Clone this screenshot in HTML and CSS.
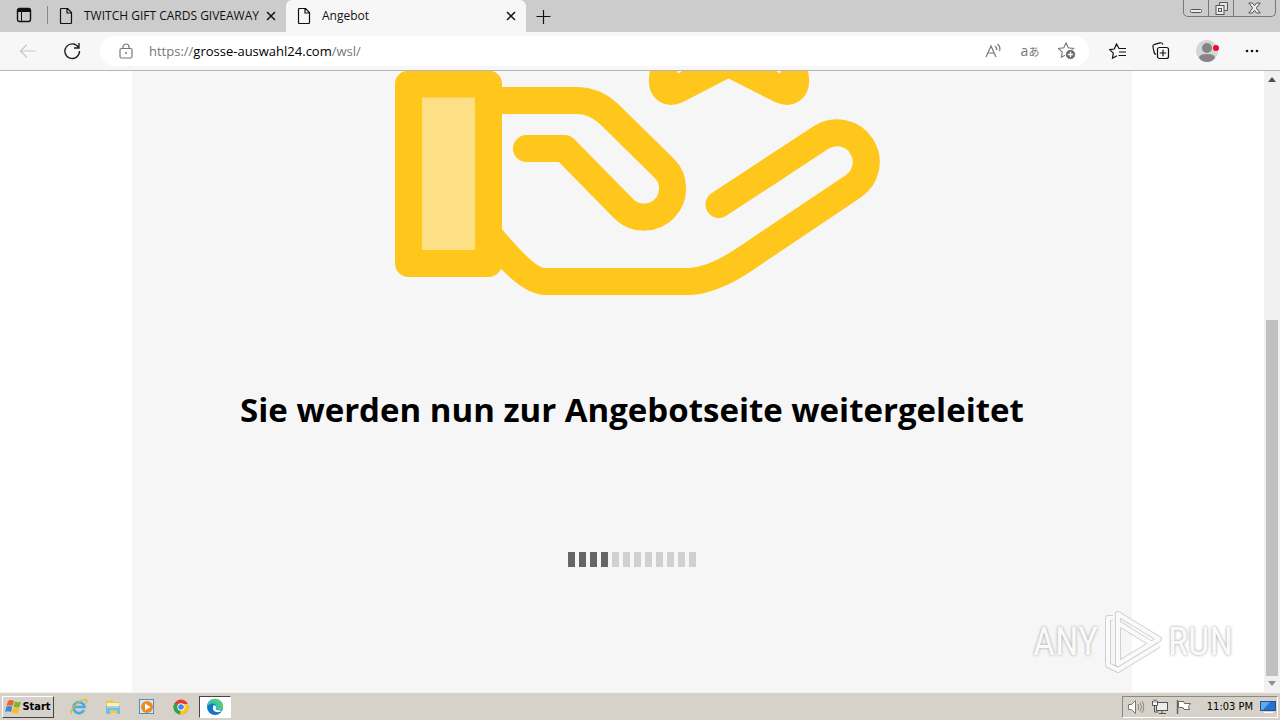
FILE: index.html
```html
<!DOCTYPE html>
<html lang="de">
<head>
<meta charset="utf-8">
<meta name="viewport" content="width=device-width, initial-scale=1">
<title>Angebot</title>
<link rel="stylesheet" href="styles.css">
</head>
<body>
<header class="tabstrip">
  <button class="tab-actions" aria-label="Tab actions"><svg width="16" height="16" viewBox="0 0 16 16"><rect x="1.500" y="1.500" width="13" height="13" rx="2" fill="none" stroke="#111" stroke-width="1.400"/><path d="M2 3.500h12" stroke="#111" stroke-width="3"/><path d="M5.500 5v9" stroke="#111"/></svg></button>
  <div class="tab">
    <svg width="14" height="16" viewBox="0 0 14 16"><path d="M2.500.5h6l4 4v10q0 1-1 1h-9q-1 0-1-1v-13q0-1 1-1zM8 1v4h4.500" fill="none" stroke="#111" stroke-width="1.200"/></svg>
    <span class="tab-title">TWITCH GIFT CARDS GIVEAWAY</span>
    <button class="tab-close" aria-label="Close tab"><svg width="10" height="10" viewBox="0 0 10 10"><path d="M1 1l8 8M9 1L1 9" stroke="#111" stroke-width="1.500"/></svg></button>
  </div>
  <div class="tab tab-active">
    <svg width="14" height="16" viewBox="0 0 14 16"><path d="M2.500.5h6l4 4v10q0 1-1 1h-9q-1 0-1-1v-13q0-1 1-1zM8 1v4h4.500" fill="none" stroke="#111" stroke-width="1.200"/></svg>
    <span class="tab-title">Angebot</span>
    <button class="tab-close" aria-label="Close tab"><svg width="10" height="10" viewBox="0 0 10 10"><path d="M1 1l8 8M9 1L1 9" stroke="#111" stroke-width="1.500"/></svg></button>
  </div>
  <button class="new-tab" aria-label="New tab"><svg width="15" height="15" viewBox="0 0 15 15"><path d="M7.500 1v14M.5 7.500h14" stroke="#111" stroke-width="1.200"/></svg></button>
  <div class="window-controls">
    <button aria-label="Minimize"><svg width="12" height="12" viewBox="0 0 12 12"><rect x=".5" y="7.500" width="11" height="3" rx="1" fill="#eee" stroke="#555"/></svg></button>
    <button aria-label="Restore"><svg width="13" height="13" viewBox="0 0 13 13"><path d="M4.500 3.500v-3h8v8h-3" fill="#e5e5e5" stroke="#555"/><rect x="1" y="3.500" width="8" height="9" fill="#eee" stroke="#555"/><rect x="3.500" y="6.500" width="3" height="3" fill="none" stroke="#555"/></svg></button>
    <button class="window-close" aria-label="Close"><svg width="13" height="12" viewBox="0 0 13 12"><path d="M.8 1h3.500l2.200 2.700L8.700 1h3.500L8.300 6l3.900 5H8.700L6.500 8.300 4.300 11H.8l3.900-5z" fill="#eee" stroke="#555"/></svg></button>
  </div>
</header>
<nav class="toolbar">
  <button class="back" aria-label="Back"><svg width="18" height="16" viewBox="0 0 18 16"><path d="M16.500 8H2M8 1.500L1.500 8 8 14.500" fill="none" stroke="#c8c8c8" stroke-width="1.200"/></svg></button>
  <button class="reload" aria-label="Reload"><svg width="18" height="18" viewBox="0 0 18 18"><path d="M15.500 5.500A7.300 7.300 0 1 0 16.500 9M16 1v5h-5" fill="none" stroke="#222" stroke-width="1.400"/></svg></button>
  <div class="address">
    <svg width="14" height="16" viewBox="0 0 14 16"><rect x="1" y="5.500" width="12" height="9.500" rx="1.500" fill="none" stroke="#777" stroke-width="1.200"/><path d="M4 5.500V4a3 3 0 0 1 6 0v1.500" fill="none" stroke="#777" stroke-width="1.200"/><circle cx="7" cy="10" r="1" fill="#777"/></svg>
    <a class="url" href="#"><span>https://</span><b>grosse-auswahl24.com</b><span>/wsl/</span></a>
    <div class="address-actions">
      <button aria-label="Read aloud"><svg width="17" height="16" viewBox="0 0 17 16"><path d="M1 14L6 3l5 11M3 10h6M10 3q2 1.500 1.500 4M12.500 1q3.500 3 2 7" fill="none" stroke="#777" stroke-width="1.200"/></svg></button>
      <button class="translate" aria-label="Translate">a<small>あ</small></button>
      <button aria-label="Add to favorites"><svg width="18" height="18" viewBox="0 0 18 18"><path d="M8 1l2.200 4.800 5.300.7-3.800 3.600.9 5.200L8 12.800l-4.600 2.500.9-5.200L.5 6.500l5.300-.7z" fill="#fff" stroke="#777" stroke-width="1.100"/><circle cx="12.500" cy="12.500" r="5" fill="#666" stroke="#fff"/><path d="M12.500 9.800v5.400M9.800 12.500h5.400" stroke="#fff" stroke-width="1.300"/></svg></button>
    </div>
  </div>
  <div class="toolbar-actions">
    <button aria-label="Favorites"><svg width="18" height="17" viewBox="0 0 18 17"><path d="M17 5.500H10L7.500 1 5.300 6 .8 6.600l3.500 3.500-.8 5.100 4.500-2.400M10 9h7M9.500 12.500H17" fill="none" stroke="#111" stroke-width="1.200"/></svg></button>
    <button aria-label="Collections"><svg width="18" height="18" viewBox="0 0 18 18"><path d="M4 12.500Q2.500 12 2 10L1 5Q.6 3 2.700 2.300L8 .8q2-.4 3 1.700" fill="none" stroke="#111" stroke-width="1.200"/><rect x="5.500" y="5.500" width="11" height="11" rx="2" fill="#f7f7f7" stroke="#111" stroke-width="1.200"/><path d="M11 7.800v6.400M7.800 11h6.400" stroke="#111" stroke-width="1.200"/></svg></button>
    <button aria-label="Profile"><svg width="24" height="24" viewBox="0 0 24 24"><circle cx="12" cy="12" r="11" fill="#d5d5d5"/><circle cx="12" cy="9" r="5" fill="#858585"/><path d="M4 19q0-4 8-4t8 4q-3 4-8 4t-8-4z" fill="#858585"/><circle cx="21" cy="9" r="3" fill="#e3122a"/></svg></button>
    <button aria-label="Settings and more"><svg width="16" height="6" viewBox="0 0 16 6"><g fill="#111"><circle cx="3" cy="3" r="1.300"/><circle cx="8" cy="3" r="1.300"/><circle cx="13" cy="3" r="1.300"/></g></svg></button>
  </div>
</nav>
<div class="viewport">
  <main class="panel">
    <svg class="hand" viewBox="382 71 500 226" aria-hidden="true">
      <rect x="408.500" y="84" width="80" height="179.500" fill="#fddf85" stroke="#ffc61c" stroke-width="27" stroke-linejoin="round"/>
      <g fill="none" stroke="#ffc61c" stroke-width="27" stroke-linecap="round" stroke-linejoin="round">
        <path d="M489 100.500H576Q595 100.500 609 114L664 168A28.300 28.300 0 0 1 624 209L564.500 148.500H526.500"/>
        <path d="M719 204.500L821 137.500A29.200 29.200 0 0 1 853 186.500L748 257Q715 280 690 281.500H545C530 281.500 510 260 490 236"/>
      </g>
      <path d="M650 71Q646 90 656 99Q668 109 683 102L728.500 78.500L775 102Q790 109 802 99Q812 90 808 71Z" fill="#ffc61c"/>
      <path d="M677 71h5l-4 2.500zM776 71h5l-1 2.500z" fill="#f7f7f7"/>
    </svg>
    <h1>Sie werden nun zur Angebotseite weitergeleitet</h1>
    <div class="progress" role="progressbar" aria-label="Weiterleitung" aria-valuemin="0" aria-valuemax="12" aria-valuenow="4">
      <i class="done"></i><i class="done"></i><i class="done"></i><i class="done"></i><i></i><i></i><i></i><i></i><i></i><i></i><i></i><i></i>
    </div>
  </main>
  <div class="scrollbar"><svg width="8" height="5" viewBox="0 0 8 5"><path d="M0 5L4 0l4 5z" fill="#505050"/></svg><div class="thumb"></div><svg width="8" height="5" viewBox="0 0 8 5"><path d="M0 0l4 5 4-5z" fill="#909090"/></svg></div>
  <div class="watermark">
    <span>ANY</span>
    <svg width="60" height="64" viewBox="0 0 60 64"><g fill="none" stroke-linejoin="round"><path d="M15 4l41 25-41 25zM15 13l34 21M10 8H5v47l10 5 41-25" stroke="#d0d0d0" stroke-width="6"/><path d="M15 4l41 25-41 25zM15 13l34 21M10 8H5v47l10 5 41-25" stroke="#fafafa" stroke-width="4"/></g></svg>
    <span>RUN</span>
  </div>
</div>
<footer class="taskbar">
  <button class="start"><svg width="17" height="16" viewBox="0 0 17 16"><path d="M3 2q3-2 6 0L7.500 7q-3-1.500-6 0z" fill="#ef6427"/><path d="M10 2.500q3 1.500 6 0L14.500 8q-3 1-6-.5z" fill="#76b82a"/><path d="M1.300 8q3-2 6 0L6 13q-3-1.500-6 0z" fill="#3c88dc"/><path d="M8.300 8.500q3 1.500 6 0L13 14q-3 1-6-.5z" fill="#f9bd20"/></svg>Start</button>
  <div class="launchers">
    <button aria-label="Internet Explorer"><svg width="18" height="18" viewBox="0 0 18 18"><path d="M14 12A5.500 5.500 0 1 1 14.500 9H4" fill="none" stroke="#43aee4" stroke-width="2.700"/><path d="M2 16Q-1 13 6 6.500T16.500 2q1 1-1 3.500" fill="none" stroke="#e6b632" stroke-width="1.300"/></svg></button>
    <button aria-label="Explorer"><svg width="18" height="18" viewBox="0 0 18 18"><path d="M2 3l6-1 1 2h6v11H2z" fill="#e9c65c"/><path d="M3 5h12v3H3z" fill="#fff1aa"/><path d="M2 8h14v8h-3v-4H6v4H2z" fill="#76bde0"/><path d="M3 9h12" stroke="#c8ecf8"/></svg></button>
    <button aria-label="Media Player"><svg width="18" height="18" viewBox="0 0 18 18"><rect x="1.500" y="1.500" width="14" height="14" fill="#d5ecf8" stroke="#4c92bd"/><circle cx="9" cy="9" r="6" fill="#f28a1b"/><path d="M7 5.500v7l5.500-3.500z" fill="#fff"/></svg></button>
    <button aria-label="Chrome"><svg width="18" height="18" viewBox="0 0 18 18"><circle cx="9" cy="9" r="7.500" fill="#e53c2f"/><path d="M9 9L2.500 5.200A7.500 7.500 0 0 0 8.500 16.500z" fill="#2da44e"/><path d="M9 9l-1 7.500A7.500 7.500 0 0 0 15.800 6H9z" fill="#fbc824"/><circle cx="9" cy="9" r="3.700" fill="#fff"/><circle cx="9" cy="9" r="2.800" fill="#4285f4"/></svg></button>
    <button class="current" aria-label="Edge"><svg width="18" height="18" viewBox="0 0 18 18"><circle cx="9" cy="9" r="8" fill="#1475c4"/><path d="M1 9A8 8 0 0 1 17 8.500Q17 12 13 12q-4 0-3-2 1-4-3-4.500Q3 5.500 1 9z" fill="#36c4b4"/><path d="M4 3Q9-1 14 3q3 2.500 3 6 0 3-4 3 3-5-2-8-3-1.500-7-1z" fill="#62cd62"/><path d="M7.500 7q-2 6 3 7 3 .5 5.500-1-2-1-4-.7-3-.3-2-2.300 1-2-2.500-3z" fill="#fff"/></svg></button>
  </div>
  <div class="tray">
    <svg width="18" height="16" viewBox="0 0 18 16"><path d="M1.500 5.500h3l4-4v13l-4-4h-3z" fill="#fff" stroke="#777"/><path d="M11 5q1.500 3 0 6M13 3.500q3 4.500 0 9M15 2q3.500 6 0 12" fill="none" stroke="#888"/></svg>
    <svg width="18" height="16" viewBox="0 0 18 16"><rect x="5.500" y="3.500" width="11" height="8" fill="#eee" stroke="#555"/><path d="M8 14.500h7M11 12v2M3.500 7v6h4" fill="none" stroke="#555"/><path d="M1.500 2v4.500h5V2M3 .5v3M5 .5v3" fill="#fff" stroke="#555"/></svg>
    <svg width="18" height="16" viewBox="0 0 18 16"><path d="M2.500 1v14" stroke="#666" stroke-width="1.500"/><path d="M3.500 2.500h5l1 2h6l-2 3 1 3H9l-1-2H3.500z" fill="#fff" stroke="#666"/></svg>
    <time>11:03 PM</time>
    <svg width="16" height="14" viewBox="0 0 16 14"><rect x=".5" y="1.500" width="15" height="9" fill="#2672cf" stroke="#235199"/><path d="M1 2h9L3 10H1z" fill="#61a9ee"/><path d="M4 12.500h9" stroke="#fff"/></svg>
  </div>
</footer>
</body>
</html>
```

FILE: styles.css
```css
* { box-sizing: border-box; }
body { margin: 0; height: 100vh; display: flex; flex-direction: column; overflow: hidden; font: 12px/16px "Open Sans", "Noto Sans", sans-serif; color: #111; background: #fff; }
button { display: flex; align-items: center; justify-content: center; padding: 0; border: 0; background: none; color: inherit; font: inherit; }
svg { display: block; flex: none; }
.tabstrip { height: 32px; flex: none; display: flex; background: #ccc; }
.tab-actions { width: 48px; border-right: 1px solid #888; margin: 6px 0 8px; }
.tab { width: 238px; display: flex; align-items: center; gap: 11px; padding: 0 9px 0 11px; }
.tab-active { width: 240px; background: #f7f7f7; border-radius: 6px 6px 0 0; }
.tab-title { flex: 1; min-width: 0; white-space: nowrap; }
.tab-close { width: 12px; height: 16px; flex: none; }
.new-tab { width: 34px; }
.window-controls { margin: 0 4px 0 auto; height: 17px; display: flex; border: 1px solid #777; border-top: 0; border-radius: 0 0 5px 5px; overflow: hidden; }
.window-controls button { width: 25px; border-right: 1px solid #777; }
.window-controls .window-close { width: 41px; border-right: 0; }
.toolbar { height: 39px; flex: none; display: flex; align-items: center; background: #f7f7f7; border-bottom: 1px solid #b5b5b5; }
.back { width: 56px; }
.reload { width: 32px; margin-right: 12px; }
.address { flex: 1; height: 30px; display: flex; align-items: center; gap: 16px; padding: 0 13px 0 19px; border-radius: 15px; background: #fff; }
.url { flex: 1; font-size: 13px; text-decoration: none; color: #777; }
.url b { font-weight: 400; color: #000; }
.address-actions { display: flex; gap: 18px; color: #777; }
.translate { width: 20px; font-size: 14px; }
.translate small { font: 11px "Noto Sans CJK JP", sans-serif; }
.toolbar-actions { display: flex; align-items: center; gap: 25px; padding: 0 20px; }
.viewport { flex: 1; min-height: 0; position: relative; display: flex; background: #fff; }
.panel { width: 100%; max-width: 1000px; margin: 0 auto; display: flex; flex-direction: column; align-items: center; background: #f6f6f6; }
.hand { width: 50%; }
h1 { margin: 89px 0 0; font: 700 33px/48px "Open Sans", "Noto Sans", sans-serif; color: #000; text-align: center; }
.progress { display: flex; gap: 4px; margin-top: 118px; }
.progress i { width: 7px; height: 15px; background: #d0d0d0; }
.progress .done { background: #666; }
.scrollbar { width: 16px; display: flex; flex-direction: column; align-items: center; padding: 6px 0; background: #f1f1f1; }
.thumb { width: 12px; height: 356px; margin: auto 0 5px; background: #c1c1c1; }
.watermark { position: absolute; right: 47px; bottom: 18px; display: flex; align-items: center; gap: 5px; font: 38px/64px "Liberation Sans Narrow", "Roboto Condensed", "Open Sans Condensed", sans-serif; color: #fafafa; text-shadow: 0 0 3px #999; }
.taskbar { height: 28px; flex: none; display: flex; align-items: center; background: #d6d2ca; border-top: 1px solid #f3f1ed; font: 11px/16px "DejaVu Sans Condensed", sans-serif; color: #000; box-shadow: 0 -1px #d6d2ca; }
.start { width: 52px; height: 22px; margin-left: 2px; font-weight: 700; border: 1px solid; border-color: #fff #444 #444 #fff; }
.launchers { display: flex; align-items: center; gap: 2px; margin-left: 9px; }
.launchers button { width: 32px; height: 22px; }
.launchers .current { background: #fff; border: 1px solid; border-color: #444 #fff #fff #444; }
.tray { height: 22px; margin: 0 2px 0 auto; display: flex; align-items: center; gap: 6px; padding: 0 1px 0 4px; border: 1px solid; border-color: #888 #fff #fff #888; }
.tray time { margin: 0 1px 0 8px; }
```
